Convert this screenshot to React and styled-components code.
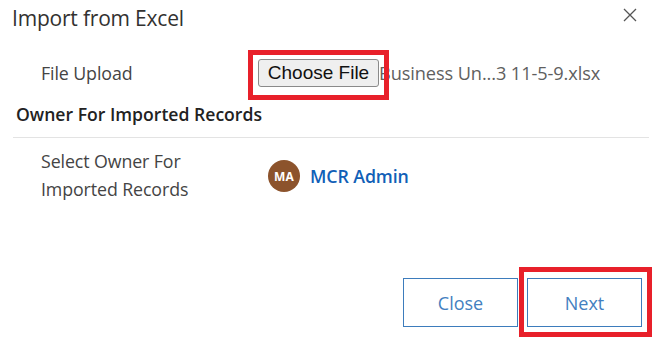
import React from "react";
import styled, { createGlobalStyle } from "styled-components";

const GlobalStyle = createGlobalStyle`
  html, body {
    margin: 0;
    padding: 0;
    background: #ffffff;
  }
  body {
    font-family: "Open Sans", "Noto Sans", sans-serif;
    color: #333333;
  }
`;

const Dialog = styled.div`
  width: 666px;
  height: 352px;
  box-sizing: border-box;
  display: flex;
  flex-direction: column;
  background: #ffffff;
`;

const Header = styled.div`
  display: flex;
  align-items: center;
  justify-content: space-between;
  height: 36px;
  padding: 0 29px 0 12px;
`;

const Title = styled.h1`
  margin: 0;
  font-size: 21px;
  font-weight: 400;
  color: #323130;
  letter-spacing: -0.2px;
`;

const CloseIcon = styled.button`
  border: none;
  background: none;
  padding: 0;
  margin-bottom: 6px;
  width: 14px;
  height: 14px;
  display: flex;
  cursor: pointer;
`;

const Row = styled.div`
  display: grid;
  grid-template-columns: 217px 1fr;
  align-items: center;
  padding: ${(p) => p.$top}px 0 0 41px;
  height: ${(p) => p.$height}px;
`;

const Label = styled.div`
  font-size: 17.8px;
  line-height: 28px;
  color: #444444;
  letter-spacing: -0.1px;
`;

const FileField = styled.div`
  display: flex;
  align-items: center;
`;

const Highlight = styled.div`
  position: relative;
  display: inline-flex;
  z-index: 1;

  &::after {
    content: "";
    position: absolute;
    top: -${(p) => p.$top}px;
    bottom: -${(p) => p.$bottom}px;
    left: -${(p) => p.$left}px;
    right: -${(p) => p.$right}px;
    border: 5px solid #e8202a;
    pointer-events: none;
  }
`;

const NativeButton = styled.button`
  font-family: "Liberation Sans", Arial, sans-serif;
  font-size: 19px;
  height: 28px;
  width: 121px;
  padding: 0;
  background: #efefef;
  border: 1px solid #8a8a8a;
  border-radius: 3px;
  color: #111111;
`;

const FileName = styled.span`
  margin-left: 0;
  font-size: 18.2px;
  color: #5f5f5f;
  white-space: nowrap;
  letter-spacing: -0.1px;
`;

const SectionTitle = styled.div`
  margin: 4px 17px 0 13px;
  padding: 0 0 11px 3px;
  font-size: 17.6px;
  line-height: 24px;
  font-weight: 600;
  color: #222222;
  border-bottom: 1px solid #e3e3e3;
`;

const Owner = styled.div`
  display: flex;
  align-items: center;
  gap: 10px;
  margin: 2px 0 0 10px;
`;

const Avatar = styled.div`
  width: 32px;
  height: 32px;
  border-radius: 50%;
  background: #8c532c;
  color: #ffffff;
  font-size: 12px;
  font-weight: 700;
  display: flex;
  align-items: center;
  justify-content: center;
  letter-spacing: 0.3px;
`;

const OwnerName = styled.a`
  font-size: 17.8px;
  font-weight: 600;
  color: #1160b7;
  text-decoration: none;
  letter-spacing: -0.1px;
`;

const Footer = styled.div`
  margin-top: auto;
  display: flex;
  justify-content: flex-end;
  gap: 9px;
  padding: 0 24px 25px 0;
`;

const ActionButton = styled.button`
  width: 115px;
  height: 49px;
  box-sizing: border-box;
  background: #ffffff;
  border: 1.5px solid #3d7cbc;
  font-family: "Open Sans", "Noto Sans", sans-serif;
  font-size: 18px;
  color: #4380c0;
  cursor: pointer;
`;

export default function App() {
  return (
    <>
      <GlobalStyle />
      <Dialog>
        <Header>
          <Title>Import from Excel</Title>
          <CloseIcon aria-label="Close">
            <svg width="14" height="14" viewBox="0 0 14 14">
              <path
                d="M1 1 L13 13 M13 1 L1 13"
                stroke="#555"
                strokeWidth="1.3"
                fill="none"
              />
            </svg>
          </CloseIcon>
        </Header>

        <Row $top={12} $height={50}>
          <Label>File Upload</Label>
          <FileField>
            <Highlight $top={9} $bottom={13} $left={10} $right={10}>
              <NativeButton>Choose File</NativeButton>
            </Highlight>
            <FileName>Business Un...3 11-5-9.xlsx</FileName>
          </FileField>
        </Row>

        <SectionTitle>Owner For Imported Records</SectionTitle>

        <Row $top={9} $height={56}>
          <Label>
            Select Owner For
            <br />
            Imported Records
          </Label>
          <Owner>
            <Avatar>MA</Avatar>
            <OwnerName href="#">MCR Admin</OwnerName>
          </Owner>
        </Row>

        <Footer>
          <ActionButton>Close</ActionButton>
          <Highlight $top={11} $bottom={10} $left={8} $right={10}>
            <ActionButton>Next</ActionButton>
          </Highlight>
        </Footer>
      </Dialog>
    </>
  );
}
